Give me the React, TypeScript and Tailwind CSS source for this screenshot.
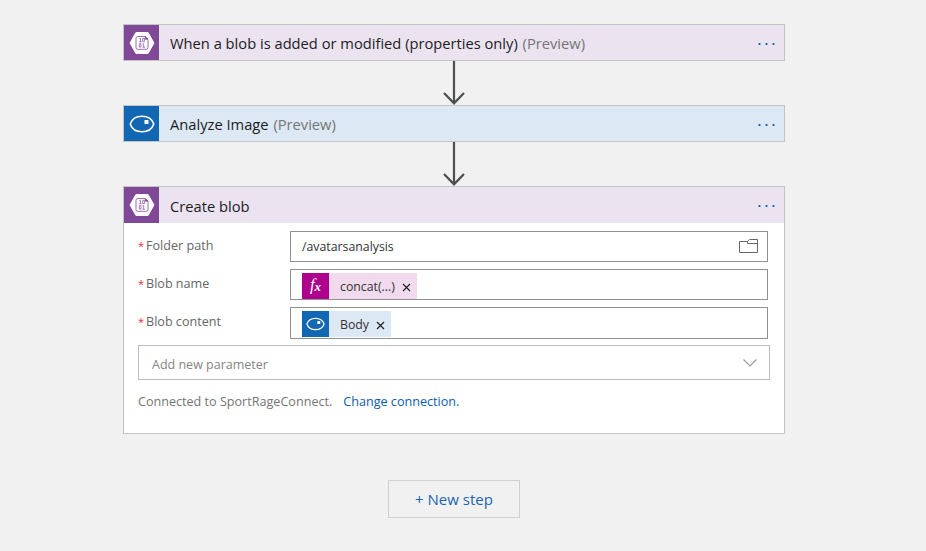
import React from 'react';

function BlobIcon() {
  return (
    <div className="flex w-[35px] shrink-0 items-center justify-center self-stretch bg-[#804998]">
      <svg width="26" height="24" viewBox="0 0 26 24" fill="none">
        <path d="M6.9 1.6h12.2L25 12l-5.9 10.4H6.9L1 12z" fill="#fff" stroke="#fff" strokeWidth="1" strokeLinejoin="round" />
        <path d="M8.600 5.500h7.600l2.800 2.800v8.400a1.600 1.600 0 0 1-1.600 1.600H8.600a1.600 1.600 0 0 1-1.600-1.600V7.100a1.600 1.600 0 0 1 1.600-1.600z" stroke="#8f5fa5" strokeWidth="0.9" />
        <path d="M16.2 5.5v2.8H19z" fill="#804998" stroke="#804998" strokeWidth="0.6" />
        <path d="M10.4 7.5l1.100-.3v3.600M10.200 10.800h2.500M13.700 7.300h1.700v3.400h-1.700zM10.300 12.700H12v3.400h-1.700zM13.600 12.900l1.100-.3v3.600M13.400 16.200H16" stroke="#8f5fa5" strokeWidth="0.8" />
      </svg>
    </div>
  );
}

function Eye({ width, height }: { width: number; height: number }) {
  return (
    <svg width={width} height={height} viewBox="0 0 26 18" fill="none">
      <path d="M1.200 9C3 3.800 8 1.200 13 1.200S23 3.800 24.800 9C23 14.200 18 16.800 13 16.800S3 14.200 1.200 9z" stroke="#fff" strokeWidth="1.6" strokeLinejoin="round" />
      <rect x="15.500" y="5" width="4" height="4" fill="#fff" />
    </svg>
  );
}

function Dots() {
  return (
    <div className="mt-0.5 mr-[9px] flex gap-1">
      <i className="h-0.5 w-[3px] border-x border-[#8fb0d8] bg-[#0f5db4]" />
      <i className="h-0.5 w-[3px] border-x border-[#8fb0d8] bg-[#0f5db4]" />
      <i className="h-0.5 w-[3px] border-x border-[#8fb0d8] bg-[#0f5db4]" />
    </div>
  );
}

function Header({ icon, title, preview, tone }: { icon: React.ReactNode; title: string; preview?: boolean; tone: string }) {
  return (
    <div className={`flex items-center ${tone}`}>
      {icon}
      <div className="ml-[11px] flex-1 pt-px text-[14.7px] leading-5 text-[#1d1d1f]">
        {title}
        {preview && <span className="ml-px text-[#757575]"> (Preview)</span>}
      </div>
      <Dots />
    </div>
  );
}

function Arrow() {
  return (
    <svg className="block shrink-0" width="24" height="44" viewBox="0 0 24 44" fill="none" stroke="#4d4f50" strokeWidth="2.2">
      <path d="M12 0v42M2 32l10 10.300L22 32" />
    </svg>
  );
}

function Field({ label, children, height }: { label: string; children: React.ReactNode; height: string }) {
  return (
    <div className="flex">
      <div className="flex w-[152px] pt-1.5 text-[12.6px] leading-[18px] text-[#666]">
        <span className="w-2 text-[11px] text-[#e8303a]">*</span>
        {label}
      </div>
      <div className={`flex w-[478px] border border-[#919191] bg-white pl-[11px] text-[12.3px] text-[#333] ${height}`}>{children}</div>
    </div>
  );
}

function Remove() {
  return (
    <svg className="mt-[3px] ml-[7px]" width="9" height="9" viewBox="0 0 9 9" stroke="#222" strokeWidth="1.2">
      <path d="M1 1l7 7M8 1L1 8" />
    </svg>
  );
}

export default function App() {
  return (
    <div className="flex h-[551px] w-[926px] flex-col bg-[#f1f1f1] pt-6 pl-[123px] font-['Open_Sans',sans-serif]">
      <div className="flex w-[662px] flex-col items-center">
        <div className="grid h-[37px] w-full border border-[#c4c4c4]">
          <Header icon={<BlobIcon />} title="When a blob is added or modified (properties only)" preview tone="bg-[#ebe3f0]" />
        </div>
        <Arrow />
        <div className="grid h-[37px] w-full border border-[#c4c4c4]">
          <Header
            icon={<div className="flex w-[35px] shrink-0 items-center justify-center self-stretch bg-[#1267b2]"><Eye width={26} height={18} /></div>}
            title="Analyze Image"
            preview
            tone="bg-[#dce8f3]"
          />
        </div>
        <Arrow />
        <div className="h-[248px] w-full border border-[#c4c4c4] bg-white">
          <div className="grid h-9">
            <Header icon={<BlobIcon />} title="Create blob" tone="bg-[#ebe3f0]" />
          </div>
          <div className="flex flex-col gap-[7px] pt-2 pl-3.5">
            <Field label="Folder path" height="h-[31px]">
              <span className="flex-1 leading-[29px]">/avatarsanalysis</span>
              <svg className="mt-[7px] mr-[9px]" width="19" height="15" viewBox="0 0 19 15" fill="none" stroke="#666">
                <path d="M8.500 2.500h-8v11h18v-13h-8l-2 2v2h10" />
              </svg>
            </Field>
            <Field label="Blob name" height="h-[31px]">
              <div className="mt-[3px] flex h-[26px] w-[115px] items-center bg-[#f1d9ee]">
                <div className="flex h-full w-[27px] items-center justify-center bg-[#ad008c] pb-0.5 font-['Liberation_Serif',serif] text-[17px] text-white italic">
                  f<span className="mt-1 text-[13px] font-bold">x</span>
                </div>
                <span className="ml-[11px] pt-0.5">concat(...)</span>
                <Remove />
              </div>
            </Field>
            <Field label="Blob content" height="h-8">
              <div className="mt-[3px] flex h-[26px] w-[89px] items-center bg-[#dce8f3]">
                <div className="flex h-full w-[27px] items-center justify-center bg-[#1267b2]"><Eye width={19} height={14} /></div>
                <span className="ml-[11px] pt-0.5">Body</span>
                <Remove />
              </div>
            </Field>
          </div>
          <div className="mt-1.5 ml-3.5 flex h-[35px] w-[632px] items-center justify-between border border-[#bdbdbd] pr-3 pl-[13px]">
            <span className="pt-1.5 text-[12.5px] text-[#858585]">Add new parameter</span>
            <svg width="14" height="8" viewBox="0 0 14 8" fill="none" stroke="#999" strokeWidth="1.1"><path d="M.5.5L7 7 13.500.5" /></svg>
          </div>
          <div className="mt-[13px] ml-3.5 flex gap-[11px] text-[12.6px] leading-[18px] text-[#757575]">
            <span>Connected to SportRageConnect.</span>
            <span className="text-[#0c5cac]">Change connection.</span>
          </div>
        </div>
      </div>
      <button className="mt-[46px] ml-[265px] h-[38px] w-[132px] shrink-0 border border-[#d0d0d0] text-[15px] text-[#1a66af]">+ New step</button>
    </div>
  );
}
